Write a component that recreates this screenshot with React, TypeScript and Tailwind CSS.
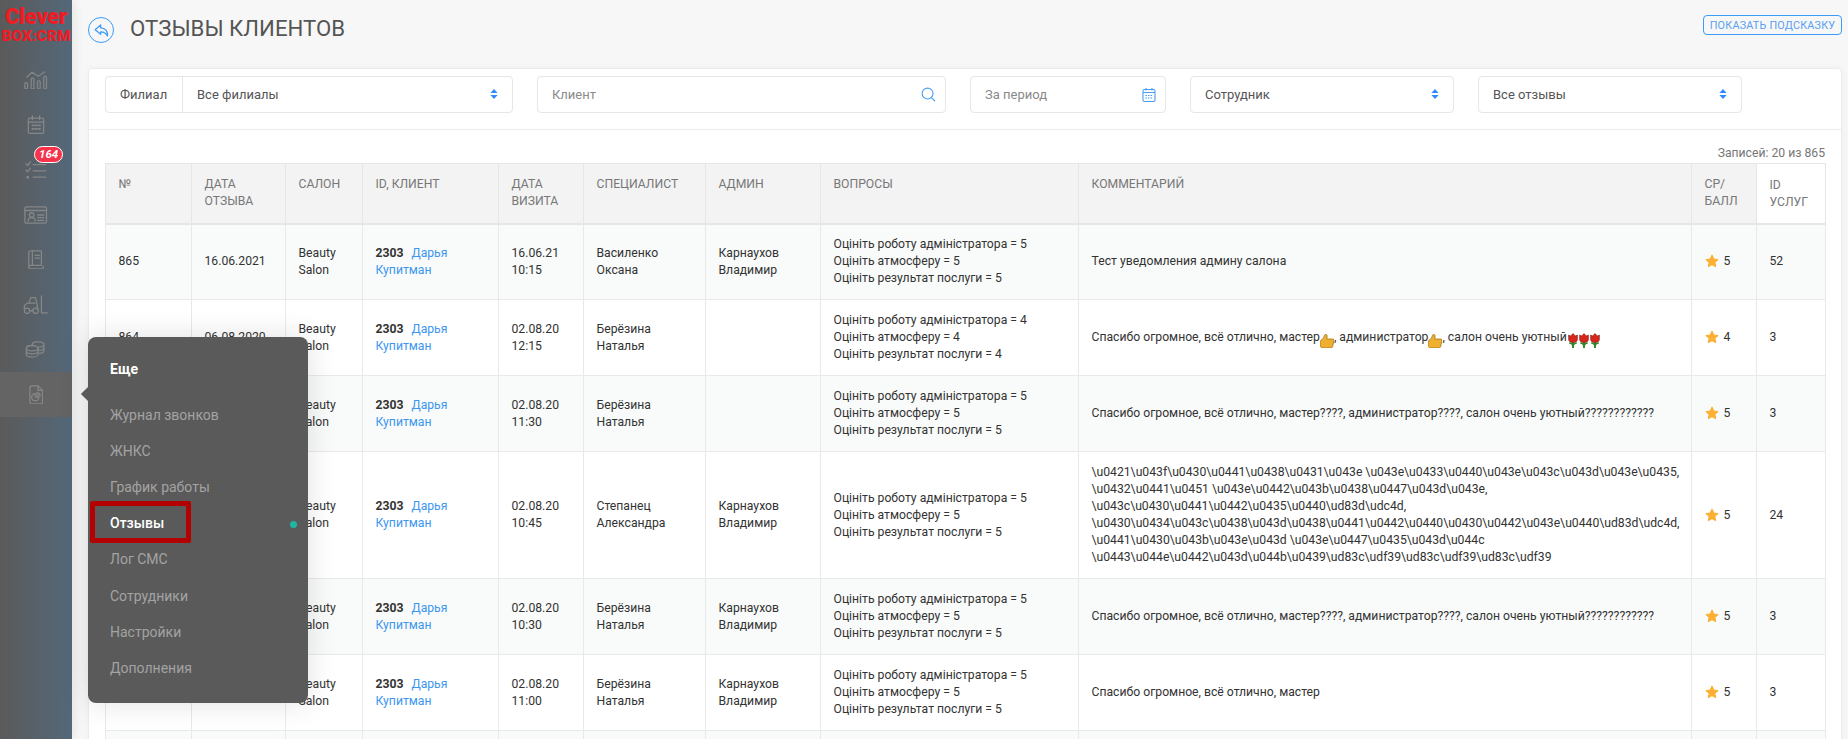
import type { ReactNode } from "react";

const stroke = "#868686";

const Icon = ({ children, w = 26, h = 26 }: { children: ReactNode; w?: number; h?: number }) => (
  <svg width={w * 0.9} height={h * 0.9} viewBox={`0 0 ${w} ${h}`} fill="none" stroke={stroke} strokeWidth="1.4" strokeLinecap="round" strokeLinejoin="round">
    {children}
  </svg>
);

const railIcons: ReactNode[] = [
  <Icon w={26} h={22}>
    <rect x="1" y="14" width="3" height="7" rx="1" />
    <rect x="8" y="9" width="3" height="12" rx="1" />
    <rect x="15" y="12" width="3" height="9" rx="1" />
    <rect x="22" y="7" width="3" height="14" rx="1" />
    <path d="M3 8 L9 2.5 L16 7 L23 2" />
  </Icon>,
  <Icon w={20} h={22}>
    <rect x="1.5" y="3.5" width="17" height="17" rx="2" />
    <path d="M1.5 8h17M6 1v4M14 1v4" />
    <path d="M6 11.5h1.5M9.5 11.5h1.5M13 11.5h1.5M6 15.5h1.5M9.5 15.5h1.5M13 15.5h1.5" strokeWidth="2" />
  </Icon>,
  <Icon w={24} h={20}>
    <path d="M1 3l2 2 3-4M1 10l2 2 3-4" />
    <path d="M9 4h14M9 11h14M9 18h14" />
    <circle cx="3" cy="18" r="1" />
  </Icon>,
  <Icon w={26} h={20}>
    <rect x="1" y="1" width="24" height="18" rx="1.5" />
    <path d="M1 5h24" />
    <circle cx="8.5" cy="10" r="2.5" />
    <path d="M4.5 17c0-3 2-4 4-4s4 1 4 4" />
    <path d="M15 10h7M15 13h7M15 16h7" />
  </Icon>,
  <Icon w={20} h={22}>
    <path d="M2 18V3a2 2 0 0 1 2-2h12v16H4a2 2 0 0 0-2 2 2 2 0 0 0 2 2h14v-3" />
    <path d="M6 1v16M9 6h5M9 9h5" />
  </Icon>,
  <Icon w={28} h={22}>
    <circle cx="4.5" cy="17.5" r="3" />
    <circle cx="14" cy="17.5" r="3" />
    <path d="M1.5 16v-4l3-3h2l2-6h5.5l2 9v4M7.5 17.5h3.5M6.5 9h7" />
    <path d="M20.5 1v19h6.5" />
  </Icon>,
  <Icon w={24} h={19}>
    <ellipse cx="8" cy="8" rx="6.5" ry="3" />
    <path d="M1.5 8v7c0 1.6 3 2.8 6.5 2.8s6.5-1.2 6.5-2.8V8M1.5 11.5c0 1.6 3 2.8 6.5 2.8s6.5-1.2 6.5-2.8" />
    <path d="M8 4c0-1.7 3-3 6.5-3S21 2.3 21 4v7c0 1.3-2 2.4-5 2.7M14.5 7c3.5 0 6.5-1.3 6.5-3M15 10.5c3 0 6-1.2 6-3" />
  </Icon>,
  <Icon w={16} h={22}>
    <path d="M1 3a2 2 0 0 1 2-2h7l5 5v13a2 2 0 0 1-2 2H3a2 2 0 0 1-2-2z" />
    <path d="M10 1v5h5" />
    <path d="M7 9.5a4 4 0 1 0 4 4H7z" />
    <path d="M9 8.5a4 4 0 0 1 3.5 3.5H9z" />
  </Icon>,
];

const Chevrons = () => (
  <svg width="8" height="10" viewBox="0 0 8 11" fill="#2f8dfb" className="-mt-px">
    <path d="M4 0 L8 4.5 H0 Z M0 6.5 H8 L4 11 Z" />
  </svg>
);

const Star = () => (
  <svg width="14" height="14" viewBox="0 0 24 24" className="-mt-px" fill="#fbb034" stroke="#fbb034" strokeWidth="2" strokeLinejoin="round">
    <path d="M12 2l3 6.6 7 .8-5.2 4.8 1.4 7.1L12 17.8l-6.2 3.5 1.4-7.1L2 9.4l7-.8z" />
  </svg>
);

const Thumb = () => (
  <svg width="14" height="14" viewBox="0 0 10 14" preserveAspectRatio="none" className="-my-1 inline-block align-[-3px]">
    <path d="M4 .5c1 0 1.3 1 1.1 2.2L4.8 5H9c.6 0 1 .5 1 1l-1 6.8c-.1.5-.5 1.2-1.2 1.2H2.5C1.2 14 0 13 0 11.5V8c0-1 .6-1.7 1.4-2.5C2.5 4.2 3 2.5 3.2 1.3 3.3.8 3.5.5 4 .5z" fill="#eeb02e" stroke="#9a6a10" strokeWidth="0.6" />
  </svg>
);

const Tulip = () => (
  <svg width="10" height="15" viewBox="0 0 8 15" preserveAspectRatio="none" className="-my-1 ml-px inline-block align-[-3px]">
    <path d="M4 9v6" stroke="#2c8a2c" strokeWidth="1.5" />
    <path d="M1 10c1 0 2.5.8 3 2.5.5-1.7 2-2.5 3-2.5" stroke="#2c8a2c" strokeWidth="1.4" fill="none" />
    <path d="M.5 2l1.7 1L4 .5 5.800 3l1.700-1v4.500C7.500 8.500 6 9.500 4 9.500S.5 8.500.5 6.500z" fill="#d5271c" stroke="#7a1410" strokeWidth="0.5" />
  </svg>
);

const colWidths = [86, 94, 77, 136, 85, 122, 115, 258, 613, 65, 69];

const headers = ["№", "Дата отзыва", "Салон", "ID, клиент", "Дата визита", "Специалист", "Админ", "Вопросы", "Комментарий", "СР/ балл"];

const spam = "Спасибо огромное, всё отлично, мастер????, администратор????, салон очень уютный????????????";
const escaped = [
  "\\u0421\\u043f\\u0430\\u0441\\u0438\\u0431\\u043e \\u043e\\u0433\\u0440\\u043e\\u043c\\u043d\\u043e\\u0435,",
  "\\u0432\\u0441\\u0451 \\u043e\\u0442\\u043b\\u0438\\u0447\\u043d\\u043e,",
  "\\u043c\\u0430\\u0441\\u0442\\u0435\\u0440\\ud83d\\udc4d,",
  "\\u0430\\u0434\\u043c\\u0438\\u043d\\u0438\\u0441\\u0442\\u0440\\u0430\\u0442\\u043e\\u0440\\ud83d\\udc4d,",
  "\\u0441\\u0430\\u043b\\u043e\\u043d \\u043e\\u0447\\u0435\\u043d\\u044c",
  "\\u0443\\u044e\\u0442\\u043d\\u044b\\u0439\\ud83c\\udf39\\ud83c\\udf39\\ud83c\\udf39",
];

type Row = {
  id: number;
  date: string;
  visit: [string, string];
  spec: [string, string];
  admin: boolean;
  score: number;
  comment: ReactNode;
  services: number;
  height: string;
};

const rows: Row[] = [
  { id: 865, date: "16.06.2021", visit: ["16.06.21", "10:15"], spec: ["Василенко", "Оксана"], admin: true, score: 5, comment: "Тест уведомления админу салона", services: 52, height: "h-[76px]" },
  {
    id: 864, date: "06.08.2020", visit: ["02.08.20", "12:15"], spec: ["Берёзина", "Наталья"], admin: false, score: 4, services: 3, height: "h-[76px]",
    comment: <>Спасибо огромное, всё отлично, мастер<Thumb />, администратор<Thumb />, салон очень уютный<Tulip /><Tulip /><Tulip /></>,
  },
  { id: 863, date: "06.08.2020", visit: ["02.08.20", "11:30"], spec: ["Берёзина", "Наталья"], admin: false, score: 5, comment: spam, services: 3, height: "h-[76px]" },
  {
    id: 862, date: "06.08.2020", visit: ["02.08.20", "10:45"], spec: ["Степанец", "Александра"], admin: true, score: 5, services: 24, height: "h-[127px]",
    comment: escaped.map((l) => <div key={l} className="whitespace-nowrap">{l}</div>),
  },
  { id: 861, date: "06.08.2020", visit: ["02.08.20", "10:30"], spec: ["Берёзина", "Наталья"], admin: true, score: 5, comment: spam, services: 3, height: "h-[76px]" },
  { id: 860, date: "06.08.2020", visit: ["02.08.20", "11:00"], spec: ["Берёзина", "Наталья"], admin: true, score: 5, comment: "Спасибо огромное, всё отлично, мастер", services: 3, height: "h-[76px]" },
];

const menu = ["Журнал звонков", "ЖНКС", "График работы", "Отзывы", "Лог СМС", "Сотрудники", "Настройки", "Дополнения"];

const td = "border border-[#e9e9e9] px-[12.5px] align-middle";

export default function App() {
  return (
    <div className="relative flex h-screen overflow-hidden bg-[#f7f7f7] text-[12.2px] leading-[17px] text-[#333]" style={{ fontFamily: "Roboto, sans-serif" }}>
      <aside className="w-[72px] shrink-0 bg-gradient-to-r from-[#5a5a5a] to-[#546879] shadow-[2px_0_10px_rgba(0,0,0,0.08)]">
        <div className="flex h-[57px] flex-col items-center overflow-hidden pt-[5px] font-black text-[#ee1c25]">
          <span className="text-[22px] leading-[23px] tracking-[-0.3px]">Clever</span>
          <span className="text-[15.5px] leading-[16px] whitespace-nowrap">BOX:CRM</span>
        </div>
        {railIcons.map((icon, i) => (
          <div key={i} className={`relative flex h-[45px] items-center justify-center ${i === 7 ? "bg-[#646464]" : ""}`}>
            {icon}
            {i === 2 && (
              <span className="absolute left-[34px] top-[-1px] rounded-full border border-white bg-[#f5344c] px-[4px] text-[11.5px] leading-[15px] font-bold italic text-white">164</span>
            )}
          </div>
        ))}
      </aside>

      <main className="min-w-0 flex-1 pl-[16px] pr-[6px]">
        <div className="flex h-[68px] items-start pt-[17px]">
          <span className="flex h-[26px] w-[26px] items-center justify-center rounded-full border border-[#3d9cf5]">
            <svg width="17" height="17" viewBox="0 0 20 20" fill="none" stroke="#3d9cf5" strokeWidth="1.5" strokeLinejoin="round">
              <path d="M9 3.5 L2.5 9 L9 14.5 V11.5 C13 11.5 15.5 13 17 16.5 C17.5 11 14.5 7 9 6.8 Z" />
            </svg>
          </span>
          <h1 className="ml-[16px] mt-[-3px] text-[22.2px] leading-[28px] font-normal text-[#555]">ОТЗЫВЫ КЛИЕНТОВ</h1>
          <button type="button" className="ml-auto mt-[-2px] h-[20px] w-[139px] rounded-[4px] border border-[#3d9cf5] pt-px text-center text-[10.8px] leading-[17px] tracking-[0.2px] text-[#5a9ff0]">
            ПОКАЗАТЬ ПОДСКАЗКУ
          </button>
        </div>

        <section className="rounded-[4px] border border-[#ececec] bg-white shadow-[0_0_8px_rgba(0,0,0,0.04)]">
          <div className="flex h-[61px] items-start gap-[24px] border-b border-[#ececec] pt-[7px] pl-[16px] text-[13px] text-[#555]">
            <div className="flex h-[37px] w-[408px] items-center rounded-[4px] border border-[#e6e6e6]">
              <span className="flex h-full w-[77px] items-center border-r border-[#e6e6e6] pl-[14px]">Филиал</span>
              <span className="pl-[14px]">Все филиалы</span>
              <span className="ml-auto pr-[14px]"><Chevrons /></span>
            </div>
            <div className="flex h-[37px] w-[409px] items-center rounded-[4px] border border-[#e6e6e6] pl-[14px] text-[#8a8a8a]">
              Клиент
              <svg className="ml-auto mr-[9px]" width="15" height="15" viewBox="0 0 16 16" fill="none" stroke="#4a9ff5" strokeWidth="1.2">
                <circle cx="7" cy="7" r="5.8" />
                <path d="M11 11l4 4.2" />
              </svg>
            </div>
            <div className="flex h-[37px] w-[196px] items-center rounded-[4px] border border-[#e6e6e6] pl-[14px] text-[#8a8a8a]">
              За период
              <svg className="ml-auto mr-[9px]" width="14" height="15" viewBox="0 0 14 15" fill="none" stroke="#4a9ff5" strokeWidth="1.1">
                <rect x="1" y="2.5" width="12" height="12" rx="1.5" />
                <path d="M1 5.5h12M4 1v2.5M10 1v2.5" />
                <path d="M3.5 8.5h7M3.5 11h7" strokeDasharray="1.5 1" />
              </svg>
            </div>
            <div className="flex h-[37px] w-[264px] items-center rounded-[4px] border border-[#e6e6e6] pl-[14px]">
              Сотрудник
              <span className="ml-auto pr-[14px]"><Chevrons /></span>
            </div>
            <div className="flex h-[37px] w-[264px] items-center rounded-[4px] border border-[#e6e6e6] pl-[14px]">
              Все отзывы
              <span className="ml-auto pr-[14px]"><Chevrons /></span>
            </div>
          </div>

          <div className="px-[16px]">
            <div className="flex h-[33px] items-end justify-end pb-[1px] text-[#777]">Записей: 20 из 865</div>
            <table className="w-[1721px] table-fixed border-collapse">
              <colgroup>
                {colWidths.map((w, i) => (
                  <col key={i} style={{ width: w }} />
                ))}
              </colgroup>
              <thead>
                <tr className="h-[60px] border-b-2 border-[#e6e6e6] uppercase text-[#777]">
                  {headers.map((h) => (
                    <th key={h} className="border border-[#e6e6e6] bg-[#f3f3f3] px-[12.5px] pt-[12px] text-left align-top font-normal">
                      {h}
                    </th>
                  ))}
                  <th className="border border-[#e6e6e6] bg-white px-[12.5px] pt-[13px] text-left align-top font-normal">ID услуг</th>
                </tr>
              </thead>
              <tbody>
                {rows.map((r, i) => (
                  <tr key={r.id} className={`${r.height} ${i % 2 === 0 ? "bg-[#f9fbfa]" : "bg-white"}`}>
                    <td className={td}>{r.id}</td>
                    <td className={td}>{r.date}</td>
                    <td className={td}>Beauty Salon</td>
                    <td className={td}>
                      <b className="mr-[8px] font-bold">2303</b>
                      <a className="text-[#3d96f0]">Дарья</a> <a className="text-[#3d96f0]">Купитман</a>
                    </td>
                    <td className={td}>{r.visit[0]}<br />{r.visit[1]}</td>
                    <td className={td}>{r.spec[0]}<br />{r.spec[1]}</td>
                    <td className={td}>{r.admin && <>Карнаухов<br />Владимир</>}</td>
                    <td className={td}>
                      <div>Оцініть роботу адміністратора = {r.score}</div>
                      <div>Оцініть атмосферу = {r.score}</div>
                      <div>Оцініть результат послуги = {r.score}</div>
                    </td>
                    <td className={td}>{r.comment}</td>
                    <td className={td}>
                      <span className="flex items-center gap-[5px]"><Star />{r.score}</span>
                    </td>
                    <td className={td}>{r.services}</td>
                  </tr>
                ))}
                <tr className="h-[76px] bg-[#f9fbfa]">
                  {colWidths.map((_, i) => (
                    <td key={i} className={td} />
                  ))}
                </tr>
              </tbody>
            </table>
          </div>
        </section>
      </main>

      <div className="absolute left-[88px] top-[337px] h-[366px] w-[220px] rounded-[8px] bg-[#5a5a5a] pt-[24px] text-[14px] shadow-[0_0_30px_rgba(0,0,0,0.12)]">
        <div className="absolute left-[-5px] top-[52px] h-[10px] w-[10px] rotate-45 bg-[#5a5a5a]" />
        <div className="px-[22px] font-bold text-white">Еще</div>
        <div className="mt-[19px]">
          {menu.map((m) => (
            <div key={m} className={`relative flex h-[36.2px] items-center px-[22px] ${m === "Отзывы" ? "font-medium text-white" : "text-[#a3a3a3]"}`}>
              {m}
              {m === "Отзывы" && (
                <>
                  <span className="absolute left-[2px] top-[-5px] h-[42px] w-[101px] rounded-[2px] border-[5px] border-[#b30000]" />
                  <span className="absolute right-[11px] top-[15px] h-[7px] w-[7px] rounded-full bg-[#1fb5a3]" />
                </>
              )}
            </div>
          ))}
        </div>
      </div>
    </div>
  );
}
